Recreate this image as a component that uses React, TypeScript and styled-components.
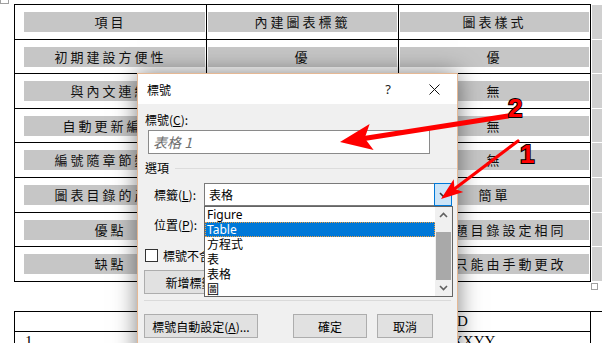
import React from "react";
import styled, { createGlobalStyle } from "styled-components";

const cjk = `"Noto Sans CJK TC", "Noto Sans", sans-serif`;
const ui = `"Noto Sans", "Noto Sans CJK TC", sans-serif`;
const bandGray = "#c6c6c6";

const GlobalStyle = createGlobalStyle`
  html, body { margin: 0; padding: 0; background: #fff; }
  body { font-family: ${cjk}; }
  * { box-sizing: border-box; }
`;

const rows: string[][] = [
  ["項目", "內建圖表標籤", "圖表樣式"],
  ["初期建設方便性", "優", "優"],
  ["與內文連結", "優", "無"],
  ["自動更新編號", "優", "無"],
  ["編號隨章節變化", "優", "無"],
  ["圖表目錄的產生", "簡單", "簡單"],
  ["優點", "簡單易用", "與標題目錄設定相同"],
  ["缺點", "無法客製", "編號只能由手動更改"],
];

const listItems = ["Figure", "Table", "方程式", "表", "表格", "圖"];

const Chevron = ({ up, color = "#606060" }: { up?: boolean; color?: string }) => (
  <svg width="9" height="6" viewBox="0 0 9 6">
    <polyline
      points={up ? "1,5 4.5,1.5 8,5" : "1,1 4.5,4.5 8,1"}
      fill="none"
      stroke={color}
      strokeWidth="1.6"
    />
  </svg>
);

export default function App() {
  return (
    <>
      <GlobalStyle />
      <Page>
        <MoveHandle />
        <Doc>
          <TableWrap>
            <DataTable>
              {rows.map((r, ri) =>
                r.map((text, ci) => (
                  <Cell key={`${ri}-${ci}`}>
                    <Band $indent={ci === 0}>{text}</Band>
                  </Cell>
                ))
              )}
            </DataTable>
            <EdgeStrip>
              {rows.map((_, i) => (
                <EdgeCell key={i} />
              ))}
            </EdgeStrip>
          </TableWrap>
          <SubTable>
            <SubCell />
            <SubCell $second>ID</SubCell>
            <SubCell>1</SubCell>
            <SubCell $second>XXYY</SubCell>
          </SubTable>
        </Doc>
        <ResizeHandle />

        <Dialog>
          <TitleBar>
            <TitleText>標號</TitleText>
            <TitleButton>?</TitleButton>
            <TitleButton>
              <svg width="11" height="11" viewBox="0 0 11 11">
                <path d="M0.5 0.5 L10.5 10.5 M10.5 0.5 L0.5 10.5" stroke="#111" strokeWidth="1" />
              </svg>
            </TitleButton>
          </TitleBar>
          <DialogBody>
            <FieldLabel>
              標號(<u>C</u>):
            </FieldLabel>
            <TextInput>表格 1</TextInput>
            <GroupHeader>
              選項
              <GroupLine />
            </GroupHeader>
            <FormRow>
              <RowLabel>
                標籤(<u>L</u>):
              </RowLabel>
              <Combo>
                <ComboText>表格</ComboText>
                <DropButton>
                  <Chevron color="#333" />
                </DropButton>
              </Combo>
            </FormRow>
            <FormRow>
              <RowLabel>
                位置(<u>P</u>):
              </RowLabel>
              <Combo />
            </FormRow>
            <CheckRow>
              <CheckBox />
              標號不含標籤(<u>E</u>)
            </CheckRow>
            <ButtonRow>
              <PushButton $width={118}>
                新增標籤(<u>N</u>)...
              </PushButton>
              <PushButton $width={88} />
            </ButtonRow>
            <Separator />
            <FooterRow>
              <PushButton $width={114}>
                標號自動設定(<u>A</u>)...
              </PushButton>
              <PushButton $width={74} $pushRight>
                確定
              </PushButton>
              <PushButton $width={56}>取消</PushButton>
            </FooterRow>
          </DialogBody>

          <DropList>
            <ListItems>
              {listItems.map((item) => (
                <ListItem key={item} $selected={item === "Table"}>
                  {item}
                </ListItem>
              ))}
            </ListItems>
            <ScrollBar>
              <ScrollArrow>
                <Chevron up />
              </ScrollArrow>
              <ScrollThumb />
              <ScrollArrow>
                <Chevron />
              </ScrollArrow>
            </ScrollBar>
          </DropList>
        </Dialog>

        <Overlay viewBox="0 0 602 343">
          <line x1="508" y1="116" x2="364" y2="138.5" stroke="#ff0000" strokeWidth="5" strokeLinecap="round" />
          <polygon points="340,142 369.6,124 364.7,138.2 373.6,150" fill="#ff0000" />
          <line x1="518" y1="141" x2="455" y2="188.5" stroke="#ff0000" strokeWidth="3.2" strokeLinecap="round" />
          <polygon points="441,199 453.7,179.3 454.5,188.7 463.3,192.1" fill="#ff0000" />
          <StepLabel x="508" y="117">2</StepLabel>
          <StepLabel x="520" y="163">1</StepLabel>
        </Overlay>
      </Page>
    </>
  );
}

const Page = styled.div`
  position: relative;
  width: 602px;
  height: 343px;
  overflow: hidden;
  background: #fff;
`;

const MoveHandle = styled.div`
  position: absolute;
  left: 0;
  top: -5px;
  width: 9px;
  height: 9px;
  border: 1px solid #a0a0a0;
  background: #fff;
`;

const ResizeHandle = styled.div`
  position: absolute;
  left: 591px;
  top: 283px;
  width: 7px;
  height: 7px;
  border: 1px solid #a0a0a0;
  background: #fff;
`;

const Doc = styled.div`
  padding: 4px 0 0 14px;
`;

const TableWrap = styled.div`
  display: flex;
  align-items: flex-start;
`;

const DataTable = styled.div`
  display: grid;
  grid-template-columns: repeat(3, 192px);
  border-top: 1px solid #000;
  border-left: 1px solid #000;
`;

const Cell = styled.div`
  height: 34.6px;
  padding: 7px 1px 0 1px;
  border-right: 1px solid #000;
  border-bottom: 1px solid #000;
`;

const Band = styled.div<{ $indent?: boolean }>`
  height: 20px;
  line-height: 20px;
  font-family: ${cjk};
  font-size: 13px;
  letter-spacing: 3px;
  color: #111;
  text-align: center;
  white-space: nowrap;
  overflow: hidden;
  background: ${(p) =>
    p.$indent
      ? `linear-gradient(to right, transparent 8px, ${bandGray} 8px)`
      : bandGray};
`;

const EdgeStrip = styled.div`
  display: flex;
  flex-direction: column;
  margin-left: 1px;
  width: 11px;
`;

const EdgeCell = styled.div`
  height: 34.6px;
  background: #d0d0d0;
  border-top: 1px solid #fff;
`;

const SubTable = styled.div`
  display: grid;
  grid-template-columns: 431px 145px;
  grid-template-rows: 20px 30px;
  margin-top: 29px;
  border-top: 1px solid #000;
  border-left: 1px solid #000;
`;

const SubCell = styled.div<{ $second?: boolean }>`
  border-right: 1px solid #000;
  border-bottom: 1px solid #000;
  padding-left: ${(p) => (p.$second ? 6 : 10)}px;
  font-family: "Liberation Serif", serif;
  font-size: 15px;
  line-height: 19px;
  color: #000;
`;

const Dialog = styled.div`
  position: absolute;
  left: 137px;
  top: 73px;
  width: 321px;
  height: 300px;
  border: 1px solid #e5b894;
  background: #f0f0f0;
  box-shadow: 0 0 22px rgba(0, 0, 0, 0.5);
  font-family: ${cjk};
  font-size: 12px;
  color: #000;
`;

const TitleBar = styled.div`
  height: 30px;
  display: flex;
  align-items: center;
  padding-left: 9px;
  background: #fff;
`;

const TitleText = styled.div`
  flex: 1;
  font-size: 12px;
`;

const TitleButton = styled.div`
  width: 46px;
  height: 30px;
  display: flex;
  align-items: center;
  justify-content: center;
  font-family: ${ui};
  font-size: 13px;
  color: #222;
`;

const DialogBody = styled.div`
  display: flex;
  flex-direction: column;
  padding: 8px 0 0 6px;
`;

const FieldLabel = styled.div`
  height: 16px;
  line-height: 16px;
  padding-left: 1px;
`;

const TextInput = styled.div`
  margin: 2px 0 0 4px;
  width: 282px;
  height: 24px;
  border: 1px solid #8a8a8a;
  background: #fff;
  padding-left: 4px;
  line-height: 22px;
  font-size: 14px;
  font-style: italic;
  color: #6e6e6e;
`;

const GroupHeader = styled.div`
  margin-top: 6px;
  height: 16px;
  line-height: 16px;
  display: flex;
  align-items: center;
  padding-left: 1px;
`;

const GroupLine = styled.div`
  flex: 1;
  height: 1px;
  margin-left: 6px;
  background: #dcdcdc;
`;

const FormRow = styled.div`
  margin-top: 7px;
  height: 23px;
  display: flex;
  align-items: center;
  padding-left: 10px;
`;

const RowLabel = styled.div`
  width: 50px;
`;

const Combo = styled.div`
  width: 248px;
  height: 23px;
  display: flex;
  border: 1px solid #7a7a7a;
  background: #fff;
`;

const ComboText = styled.div`
  flex: 1;
  padding-left: 4px;
  line-height: 21px;
  font-size: 12px;
`;

const DropButton = styled.div`
  width: 18px;
  margin: -1px -1px -1px 0;
  border: 1px solid #0078d7;
  background: #cce4f7;
  display: flex;
  align-items: center;
  justify-content: center;
`;

const CheckRow = styled.div`
  margin-top: 13px;
  height: 13px;
  display: flex;
  align-items: center;
  padding-left: 1px;
`;

const CheckBox = styled.div`
  width: 13px;
  height: 13px;
  border: 1px solid #333;
  background: #fff;
  margin-right: 5px;
`;

const ButtonRow = styled.div`
  margin-top: 8px;
  display: flex;
  gap: 6px;
`;

const PushButton = styled.div<{ $width: number; $pushRight?: boolean }>`
  width: ${(p) => p.$width}px;
  height: 24px;
  border: 1px solid #adadad;
  background: #e1e1e1;
  display: flex;
  align-items: center;
  justify-content: center;
  white-space: nowrap;
  font-size: 12px;
  margin-left: ${(p) => (p.$pushRight ? "auto" : "0")};
`;

const Separator = styled.div`
  margin: 6px 6px 0 0;
  height: 1px;
  background: #dadada;
`;

const FooterRow = styled.div`
  margin-top: 13px;
  display: flex;
  gap: 10px;
  padding-right: 24px;
`;

const DropList = styled.div`
  position: absolute;
  left: 66px;
  top: 132px;
  width: 249px;
  height: 91px;
  display: flex;
  border: 1px solid #646464;
  background: #fff;
`;

const ListItems = styled.div`
  flex: 1;
  overflow: hidden;
`;

const ListItem = styled.div<{ $selected?: boolean }>`
  height: 15px;
  line-height: 15px;
  padding-left: 2px;
  font-family: ${ui};
  font-size: 12px;
  white-space: nowrap;
  color: ${(p) => (p.$selected ? "#fff" : "#000")};
  background: ${(p) => (p.$selected ? "#0078d7" : "transparent")};
  outline: ${(p) => (p.$selected ? "1px dotted #f0a040" : "none")};
  outline-offset: -1px;
`;

const ScrollBar = styled.div`
  width: 17px;
  display: flex;
  flex-direction: column;
  background: #f0f0f0;
`;

const ScrollArrow = styled.div`
  height: 17px;
  display: flex;
  align-items: center;
  justify-content: center;
`;

const ScrollThumb = styled.div`
  margin: 8px 1px 0 1px;
  height: 48px;
  background: #a9a9a9;
  flex: none;
  & + div {
    margin-top: auto;
  }
`;

const Overlay = styled.svg`
  position: absolute;
  left: 0;
  top: 0;
  width: 602px;
  height: 343px;
  pointer-events: none;
`;

const StepLabel = styled.text`
  font-family: "Liberation Sans", sans-serif;
  font-weight: bold;
  font-size: 26px;
  fill: #ff0000;
  stroke: #000;
  stroke-width: 2px;
  paint-order: stroke;
`;
